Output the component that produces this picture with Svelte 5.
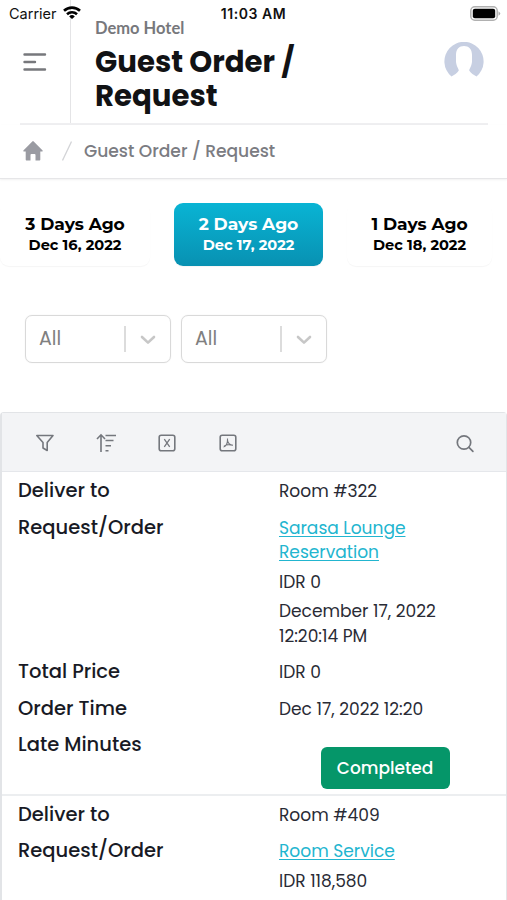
<script>
  let activeDay = 1;

  const days = [
    { label: '3 Days Ago', date: 'Dec 16, 2022' },
    { label: '2 Days Ago', date: 'Dec 17, 2022' },
    { label: '1 Days Ago', date: 'Dec 18, 2022' }
  ];

  const filters = ['All', 'All'];

  const orders = [
    {
      room: 'Room #322',
      item: 'Sarasa Lounge Reservation',
      price: 'IDR 0',
      date: 'December 17, 2022 12:20:14 PM',
      total: 'IDR 0',
      time: 'Dec 17, 2022 12:20',
      status: 'Completed'
    },
    {
      room: 'Room #409',
      item: 'Room Service',
      price: 'IDR 118,580'
    }
  ];
</script>

<div class="screen">
  <div class="status-bar">
    <div class="carrier">
      <span>Carrier</span>
      <svg width="18" height="13" viewBox="0 0 18 13" fill="none" stroke="#000" stroke-width="2.6">
        <path d="M1 4.8a11.6 11.6 0 0 1 16 0" />
        <path d="M4 8.2a7.3 7.3 0 0 1 10 0" />
        <path d="M9 13 6.2 10.4a4 4 0 0 1 5.6 0z" fill="#000" stroke="none" />
      </svg>
    </div>
    <span class="clock">11:03 AM</span>
    <svg class="battery" width="31" height="15" viewBox="0 0 31 15">
      <rect x="0.8" y="0.8" width="26.4" height="13.4" rx="4" fill="#fff" stroke="#b0b0b0" stroke-width="1.5" />
      <rect x="2.8" y="2.8" width="22.4" height="9.4" rx="2" fill="#000" />
      <path d="M28.5 5.2q3.4 2.3 0 4.6z" fill="#aaa" />
    </svg>
  </div>

  <header class="header">
    <button class="menu" aria-label="Menu">
      <svg width="24" height="20" viewBox="0 0 24 20" fill="none" stroke="#77787c" stroke-width="2.4" stroke-linecap="round">
        <path d="M1.5 2.5h20.5M1.5 10h10.5M1.5 17.5h20.5" />
      </svg>
    </button>
    <div class="titles">
      <p class="hotel">Demo Hotel</p>
      <h1>Guest Order / Request</h1>
    </div>
    <svg class="avatar" width="40" height="36" viewBox="0 0 40 36">
      <path
        fill="#c7cfe2"
        d="M7.5 34.5A19.6 19.6 0 1 1 32.5 34.5C30 33 26.5 31 25.2 28.5C25.2 26.5 28 24 28 19V13C28 7 24.7 4 20 4S12 7 12 13v6c0 5 2.8 7.5 2.8 9.5C13.5 31 10 33 7.5 34.5z"
      />
    </svg>
  </header>

  <nav class="breadcrumb">
    <svg width="20" height="20" viewBox="0 0 20 20" fill="#9a9ba2">
      <path d="M9.3.4.6 9.3c-.6.7-.2 1.3.6 1.3h1.5V18.5c0 .7.4 1.1 1.1 1.1H7.5V14c0-.6.3-1 .9-1h3.2c.6 0 .9.4.9 1v5.6h3.7c.7 0 1.1-.4 1.1-1.1v-7.900h1.5c.8 0 1.2-.6.6-1.3L10.7.4a1 1 0 0 0-1.4 0z" />
    </svg>
    <svg class="slash" width="10" height="20" viewBox="0 0 10 20" stroke="#d3d4d7" stroke-width="1.3">
      <path d="M9.5.5.5 19.5" />
    </svg>
    <span>Guest Order / Request</span>
  </nav>

  <div class="days">
    {#each days as day, i}
      <button class="day" class:active={activeDay === i} on:click={() => (activeDay = i)}>
        <span class="day-label">{day.label}</span>
        <span class="day-date">{day.date}</span>
      </button>
    {/each}
  </div>

  <div class="filters">
    {#each filters as filter}
      <div class="select">
        <span class="select-value">{filter}</span>
        <span class="select-arrow">
          <svg width="16" height="10" viewBox="0 0 16 10" fill="none" stroke="#c7c7c7" stroke-width="2.6" stroke-linecap="round" stroke-linejoin="round">
            <path d="M2 2l6 5.6L14 2" />
          </svg>
        </span>
      </div>
    {/each}
  </div>

  <div class="table">
    <div class="toolbar">
      <svg width="20" height="20" viewBox="0 0 20 20" fill="none" stroke="#74777d" stroke-width="1.6" stroke-linejoin="round">
        <path d="M1.8 2.5h16.2L12.2 9.5v8L8 15V9.5z" />
      </svg>
      <svg width="20" height="20" viewBox="0 0 20 20" fill="none" stroke="#74777d" stroke-width="1.6">
        <path d="M5 19V2M1 6l4-4.2L9 6M9.5 2.5h10.5M9.5 7.5h8M9.5 12.7h5.5M9.5 17.8h3" />
      </svg>
      <svg width="20" height="20" viewBox="0 0 20 20" fill="none" stroke="#74777d" stroke-width="1.6">
        <rect x="2.2" y="2.2" width="15.6" height="15.6" rx="2" />
        <path d="M7.3 6.2l5.4 7.6M12.7 6.2l-5.4 7.6" stroke-width="1.3" />
      </svg>
      <svg width="20" height="20" viewBox="0 0 20 20" fill="none" stroke="#74777d" stroke-width="1.6">
        <rect x="2.2" y="2.2" width="15.6" height="15.6" rx="2" />
        <path d="M9.5 5.5c0 2.5.2 4-1 6-.8 1.3-2 2.4-3 2.5M9.5 7c.2 2.5 2 4.8 5.5 5.2M6 13.2c2-1.5 5-2 8.5-1" stroke-width="1.1" />
      </svg>
      <svg class="search" width="20" height="20" viewBox="0 0 20 20" fill="none" stroke="#74777d" stroke-width="1.7" stroke-linecap="round">
        <circle cx="9" cy="9.5" r="6.7" />
        <path d="M13.9 14.4l4 4" />
      </svg>
    </div>

    {#each orders as order}
      <div class="order">
        <div class="label">Deliver to</div>
        <div class="value">{order.room}</div>
        <div class="label">Request/Order</div>
        <div class="value">
          <a href="#order">{order.item}</a>
          <p>{order.price}</p>
          {#if order.date}<p>{order.date}</p>{/if}
        </div>
        {#if order.status}
          <div class="label">Total Price</div>
          <div class="value">{order.total}</div>
          <div class="label">Order Time</div>
          <div class="value">{order.time}</div>
          <div class="label">Late Minutes</div>
          <div class="action"><button class="badge">{order.status}</button></div>
        {/if}
      </div>
    {/each}
  </div>
</div>

<style>
  :global(body) {
    margin: 0;
    background: #fff;
  }

  .screen {
    position: relative;
    height: 900px;
    overflow: hidden;
    font-family: Poppins, Inter, sans-serif;
    color: #181a25;
  }

  .screen * {
    box-sizing: border-box;
  }

  svg {
    display: block;
    flex: none;
  }

  button {
    font-family: inherit;
    border: none;
    background: none;
    padding: 0;
  }

  p,
  h1 {
    margin: 0;
  }

  .status-bar {
    position: absolute;
    top: 0;
    left: 0;
    right: 0;
    height: 27px;
    padding: 0 6px 0 9px;
    display: grid;
    grid-template-columns: 1fr auto 1fr;
    align-items: center;
    color: #111;
    font-family: Inter, sans-serif;
    font-size: 14.5px;
  }

  .carrier {
    display: flex;
    align-items: center;
    gap: 6px;
  }

  .carrier svg {
    margin-top: -2px;
  }

  .clock {
    margin-right: 3px;
    font-weight: 600;
    font-size: 14px;
    letter-spacing: 0.55px;
  }

  .battery {
    justify-self: end;
  }

  .header {
    display: flex;
    height: 125px;
    margin: 0 19px 0 20px;
    border-bottom: 2px solid #efeff1;
  }

  .menu {
    width: 51px;
    padding: 1px 0 0 3px;
    border-right: 1px solid #e4e4e6;
    flex: none;
  }

  .titles {
    flex: 1;
    padding: 17px 0 0 24px;
  }

  .hotel {
    font-family: Lato, sans-serif;
    font-weight: 700;
    font-size: 16.5px;
    line-height: 22px;
    color: #77787c;
  }

  h1 {
    margin-top: 5.5px;
    width: 240px;
    font-size: 29.2px;
    line-height: 34.5px;
    font-weight: 700;
    color: #111214;
  }

  .avatar {
    margin: 42px 4px 0 0;
  }

  .breadcrumb {
    display: flex;
    align-items: center;
    height: 54px;
    padding: 0 0 1px 23px;
    border-bottom: 1px solid #e6e6e8;
    box-shadow: 0 1px 2px rgba(0, 0, 0, 0.06);
    font-size: 17.1px;
    font-weight: 500;
    color: #7b7c82;
  }

  .slash {
    margin: 0 12px 0 19px;
  }

  .days {
    display: flex;
    gap: 24px;
    margin-top: 24px;
  }

  .day {
    width: 149px;
    height: 63px;
    border-radius: 9px;
    display: flex;
    flex-direction: column;
    align-items: center;
    justify-content: center;
    color: #000;
    font-family: Montserrat, Inter, sans-serif;
    font-weight: 700;
    box-shadow: 0 1px 1px rgba(0, 0, 0, 0.04);
  }

  .day:first-child {
    width: 150px;
  }

  .day:last-child {
    width: 145px;
  }

  .day.active {
    color: #fff;
    background: linear-gradient(#09b4d4, #0891b2);
  }

  .day-label {
    font-size: 17.1px;
    line-height: 22px;
  }

  .day-date {
    font-size: 14.6px;
    line-height: 21px;
  }

  .filters {
    display: flex;
    gap: 10px;
    margin: 49px 0 0 25px;
  }

  .select {
    display: flex;
    align-items: center;
    width: 146px;
    height: 48px;
    padding: 0 14px 0 13px;
    border: 1.5px solid #d9d9d9;
    border-radius: 7px;
    color: #808080;
    font-size: 19px;
    box-shadow: 0 0 1px #ddd;
  }

  .select-value {
    flex: 1;
    margin-top: -1px;
  }

  .select-arrow {
    display: flex;
    align-items: center;
    height: 26px;
    padding: 2px 0 0 14px;
    border-left: 2px solid #dcdcdc;
  }

  .table {
    margin-top: 49px;
    border: 1px solid #e2e4e7;
    border-left-width: 2px;
    border-radius: 4px 4px 0 0;
    height: 520px;
  }

  .toolbar {
    display: flex;
    align-items: center;
    gap: 41px;
    height: 59px;
    padding: 2px 31px 0 33px;
    background: #f3f4f6;
    border-bottom: 1px solid #e5e7eb;
  }

  .search {
    margin-left: auto;
  }

  .order {
    display: grid;
    grid-template-columns: 261px 1fr;
    padding: 0 0 0 16px;
  }

  .order + .order {
    margin-top: -1px;
    border-top: 2px solid #eceef0;
  }

  .label {
    padding: 7px 0 5px;
    font-size: 19.5px;
    line-height: 24.5px;
    font-weight: 500;
  }

  .value {
    padding: 7px 50px 5px 0;
    font-size: 17.05px;
    line-height: 24.5px;
    color: #292b35;
  }

  .value a {
    display: block;
    color: #22b5cf;
    text-decoration: underline;
    text-underline-offset: 2px;
  }

  .value p {
    margin-top: 5px;
  }

  .action {
    padding: 20.5px 0 6px 41.5px;
  }

  .badge {
    display: block;
    width: 129px;
    height: 42px;
    border-radius: 6px;
    background: #059669;
    color: #fff;
    font-size: 17px;
    font-weight: 500;
  }
</style>
